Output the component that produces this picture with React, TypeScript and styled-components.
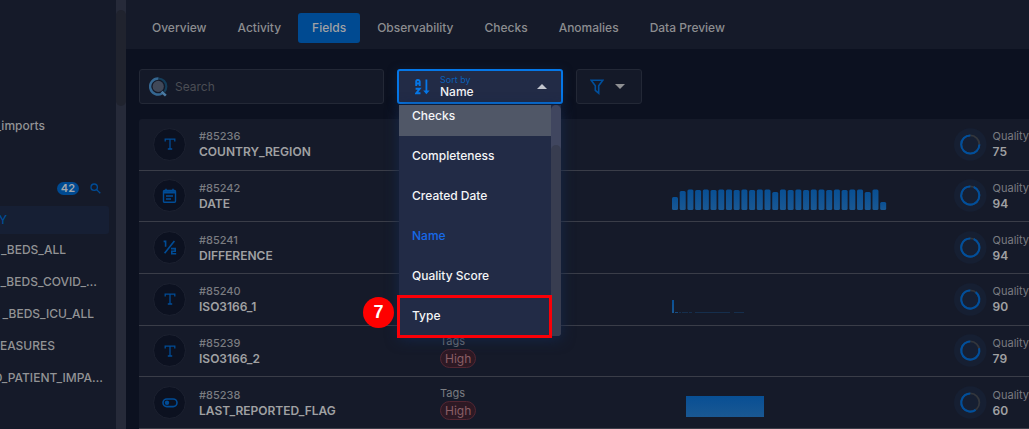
import React from 'react';
import styled, { createGlobalStyle } from 'styled-components';

const Global = createGlobalStyle`
  *, *::before, *::after { box-sizing: border-box; }
  body {
    margin: 0;
    background: #0c1120;
    color: #8f9196;
    font-family: Inter, "Liberation Sans", sans-serif;
    font-size: 12px;
    line-height: 16px;
    overflow: hidden;
  }
  button, input, select { font: inherit; color: inherit; }
  ul { margin: 0; padding: 0; list-style: none; }
`;

const Page = styled.div`
  display: flex;
  height: 100vh;
  overflow: hidden;
`;

/* ---------- sidebar ---------- */

const Sidebar = styled.aside`
  flex: none;
  width: 126px;
  display: flex;
  background: #151a29;
`;

const SidebarBody = styled.div`
  flex: 1;
  min-width: 0;
  padding-top: 110px;
`;

const ScrollTrack = styled.div`
  flex: none;
  width: 10px;
  padding-top: 10px;
  background: #262a39;
`;

const ScrollThumb = styled.div`
  height: 96px;
  border-radius: 5px;
  background: #20232e;
`;

const TreeItem = styled.a<{ $active?: boolean }>`
  display: flex;
  align-items: center;
  height: ${p => (p.$active ? 28 : 32)}px;
  margin-right: 7px;
  border-radius: 0 3px 3px 0;
  background: ${p => (p.$active ? '#161f34' : 'transparent')};
  color: ${p => (p.$active ? '#004c96' : '#929395')};
  font-weight: 500;
  text-decoration: none;
`;

const TreeLabel = styled.span<{ $visible: number }>`
  display: flex;
  justify-content: flex-end;
  width: ${p => p.$visible}px;
  overflow: hidden;
  white-space: nowrap;
`;

const TreeHeader = styled.div`
  display: flex;
  align-items: center;
  justify-content: flex-end;
  gap: 11px;
  height: 28px;
  margin-top: 32px;
  padding-right: 15px;
`;

const Tree = styled.nav`
  padding-top: 4px;
`;

const Count = styled.span`
  padding: 0 4px;
  border-radius: 7px;
  background: #004a91;
  color: #a3a7ac;
  font-size: 11px;
  font-weight: 600;
  line-height: 13px;
`;

const IconButton = styled.button`
  display: flex;
  padding: 0;
  border: 0;
  background: none;
  color: #004c96;
`;

/* ---------- main ---------- */

const Main = styled.main`
  flex: 1;
  min-width: 0;
  display: flex;
  flex-direction: column;
`;

const Tabs = styled.nav`
  display: flex;
  gap: 3px;
  padding: 13px 12px 6px;
  background: #151a29;
`;

const Tab = styled.button<{ $active?: boolean }>`
  height: 30px;
  padding: 0 14px;
  border: 0;
  border-radius: 3px;
  background: ${p => (p.$active ? '#004a91' : 'transparent')};
  color: ${p => (p.$active ? '#a0a2a5' : '#8c8d90')};
  font-weight: 500;
  white-space: nowrap;
`;

const Toolbar = styled.div`
  display: flex;
  gap: 13px;
  padding: 20px 13px 15px;
`;

const SearchBox = styled.label`
  display: flex;
  align-items: center;
  gap: 7px;
  width: 245px;
  height: 35px;
  padding: 0 9px;
  border: 1px solid #232836;
  border-radius: 3px;
  background: #141928;
`;

const SearchInput = styled.input`
  flex: 1;
  min-width: 0;
  padding: 0;
  border: 0;
  outline: 0;
  background: none;
  &::placeholder { color: #4b4d54; opacity: 1; }
`;

const SortField = styled.div`
  position: relative;
  display: flex;
  align-items: center;
  gap: 10px;
  width: 166px;
  height: 35px;
  padding: 0 14px 0 16px;
  border: 2px solid #0577e8;
  border-radius: 3px;
  background: #222b46;
  color: #0577e8;
  box-shadow: 0 2px 10px #10203c;
`;

const SortText = styled.div`
  flex: 1;
  min-width: 0;
  display: flex;
  flex-direction: column;
`;

const SortLabel = styled.label`
  color: #0a5fb8;
  font-size: 9px;
  line-height: 10px;
`;

const SortSelect = styled.select`
  appearance: none;
  height: 14px;
  padding: 0;
  border: 0;
  outline: 0;
  background: none;
  color: #f1f2f5;
  font-weight: 500;
  line-height: 14px;
`;

const Menu = styled.div`
  position: absolute;
  z-index: 2;
  top: 34px;
  left: 0;
  width: 162px;
  height: 231px;
  display: flex;
  background: #222b46;
  border-radius: 0 0 3px 3px;
  box-shadow: 0 3px 14px #14274a;
`;

const MenuList = styled.ul`
  flex: 1;
  display: flex;
  flex-direction: column;
  justify-content: flex-end;
  overflow: hidden;
`;

const MenuItem = styled.li<{ $hover?: boolean; $selected?: boolean }>`
  flex: none;
  display: flex;
  align-items: center;
  height: 40px;
  padding: 0 13px;
  background: ${p => (p.$hover ? '#505767' : 'transparent')};
  color: ${p => (p.$selected ? '#1769e8' : '#f4f5f7')};
  font-weight: 500;
`;

const MenuTrack = styled.div`
  width: 10px;
  display: flex;
  flex-direction: column;
  justify-content: flex-end;
  border-radius: 5px 5px 4px 0;
  background: #40465f;
`;

const MenuThumb = styled.div`
  height: 191px;
  border-radius: 5px 5px 4px 0;
  background: #383d50;
`;

const Highlight = styled.div`
  position: absolute;
  right: 9px;
  bottom: -2px;
  left: -2px;
  height: 43px;
  border: 3px solid #fb0007;
`;

const Step = styled.span`
  position: absolute;
  bottom: 8px;
  left: -36px;
  width: 31px;
  height: 31px;
  border-radius: 50%;
  background: #fe0000;
  color: #fff;
  font: 700 18px/30px "Liberation Sans", sans-serif;
  text-align: center;
`;

const FilterButton = styled.button`
  display: flex;
  align-items: center;
  justify-content: center;
  gap: 11px;
  width: 66px;
  height: 35px;
  padding: 0 3px 0 0;
  border: 1px solid #232836;
  border-radius: 3px;
  background: #141928;
  color: #004f9c;
`;

/* ---------- field list ---------- */

const FieldList = styled.ul`
  flex: 1;
  display: grid;
  grid-auto-rows: 1fr;
  margin-left: 13px;
  background: #151a29;
  border-radius: 3px 0 0 0;
`;

const FieldRow = styled.li`
  display: grid;
  grid-template-columns: 301fr 232fr 282fr 75px;
  align-items: center;
  border-bottom: 1px solid #3a3d48;
`;

const Lead = styled.div`
  display: flex;
  align-items: center;
  gap: 13px;
  padding-left: 14px;
`;

const TypeBadge = styled.span`
  display: flex;
  align-items: center;
  justify-content: center;
  width: 33px;
  height: 33px;
  border: 1px solid #1c2130;
  border-radius: 50%;
  background: #0c1120;
  color: #004c96;
`;

const Stack = styled.div`
  display: flex;
  flex-direction: column;
  align-items: flex-start;
`;

const Caption = styled.span<{ $strong?: boolean }>`
  color: #7a7c81;
  font-size: 11px;
  font-weight: ${p => (p.$strong ? 500 : 400)};
`;

const Value = styled.span`
  color: #a0a1a3;
  font-weight: 600;
`;

const Tag = styled.span`
  padding: 0 4px;
  border: 1px solid #532632;
  border-radius: 10px;
  background: #2d1924;
  color: #8a5f66;
  font-size: 12px;
  line-height: 17px;
`;

const Quality = styled.div`
  display: flex;
  align-items: center;
  gap: 6px;
`;

const ChartSvg = styled.svg`
  display: block;
  width: 216px;
  height: 28px;
`;

/* ---------- drawings ---------- */

const TextIcon = () => (
  <svg width="12" height="12" viewBox="0 0 12 12" fill="none" stroke="currentColor" strokeWidth="1.3">
    <path d="M1.2 3.6V1.1h9.6v2.5M6 1v10M3.8 11h4.4" />
  </svg>
);

const DateIcon = () => (
  <svg width="15" height="16" viewBox="0 0 15 16" fill="none" stroke="currentColor" strokeWidth="1.4">
    <rect x="1.5" y="2.5" width="12" height="11.8" rx="1" />
    <path d="M1.5 4h12M4 .8v2M11 .8v2M4 8h7M4 11h5" />
    <path d="M1.5 3.5h12v2h-12z" fill="currentColor" stroke="none" />
  </svg>
);

const FractionIcon = () => (
  <svg width="14" height="15" viewBox="0 0 14 15" fill="none" stroke="currentColor" strokeWidth="1.6">
    <path d="M.6 1.4h2v5.400M11.400 1L1.600 13.200M8 8.600h4.200v2.600H8.800v2.600h4.400" />
  </svg>
);

const ToggleIcon = () => (
  <svg width="16" height="10" viewBox="0 0 16 10" fill="none" stroke="currentColor" strokeWidth="1.6">
    <rect x="1" y="1" width="14" height="7.6" rx="3.8" />
    <circle cx="5" cy="4.8" r="2.2" fill="currentColor" stroke="none" />
  </svg>
);

const LogoIcon = () => (
  <svg width="19" height="20" viewBox="0 0 19 20" fill="none">
    <circle cx="9.2" cy="9.4" r="5.6" fill="#414959" />
    <path d="M9.4 1.5a8 8 0 0 1 7.9 8c0 2-.8 3.9-2 5.2" stroke="#143d5a" strokeWidth="2.2" />
    <path d="M9.4 1.5a8 8 0 1 0 3.6 15" stroke="#356791" strokeWidth="2.4" />
    <path d="M12.6 14.800l4.200 3.800" stroke="#4c7ba3" strokeWidth="2.6" />
  </svg>
);

const SortIcon = () => (
  <svg width="15" height="16" viewBox="0 0 15 16" fill="none" stroke="currentColor">
    <path d="M1.2 7V2.600Q1.200 1 2.600 1h.7Q4.700 1 4.700 2.600V7M1.200 4.500h3.500M.6 9.800h4.100L1.300 14.200h4.200" strokeWidth="1.9" />
    <path d="M11.400.5v12" strokeWidth="1.8" />
    <path d="M8.200 11.400h6.400l-3.200 3.800z" fill="currentColor" stroke="none" />
  </svg>
);

const FilterIcon = () => (
  <svg width="14" height="16" viewBox="0 0 14 16" fill="none" stroke="currentColor" strokeWidth="1.6">
    <path d="M1.2 1.3h11.600L8.700 6.800v7.400L5.300 11.300V6.800z" />
  </svg>
);

const Caret = ({ up }: { up?: boolean }) => (
  <svg width="10" height="5" viewBox="0 0 10 5">
    <path d={up ? 'M0 5h10L5 0z' : 'M0 0h10L5 5z'} fill={up ? '#c3c6cf' : '#8f9093'} />
  </svg>
);

const MagnifierIcon = () => (
  <svg width="11" height="11" viewBox="0 0 11 11" fill="none" stroke="currentColor" strokeWidth="1.3">
    <circle cx="4.2" cy="4.2" r="3.2" />
    <path d="M6.6 6.6l3.7 3.7" />
  </svg>
);

const Ring = ({ score }: { score: number }) => (
  <svg width="33" height="33" viewBox="0 0 33 33" fill="none">
    <circle cx="16.5" cy="16.5" r="16.5" fill="#161f32" />
    <circle cx="16.5" cy="16.5" r="9.2" stroke="#33363c" strokeWidth="1.8" />
    <circle
      cx="16.5" cy="16.5" r="9.2" stroke="#004f9c" strokeWidth="2.1" pathLength={100}
      strokeDasharray={`${score} 100`} transform={`rotate(${270 + (100 - score) * 3.6} 16.5 16.5)`}
    />
  </svg>
);

type Bar = { x: number; w: number; h: number; dim?: boolean };

const dailyHeights = [
  13, 19, 20.5, 20, 20.5, 20, 20.5, 20.5, 20, 20.5, 20, 20.5, 20.5, 18,
  20.5, 20, 20.5, 20, 20.5, 20.5, 20, 20.5, 20, 20.5, 20.5, 18, 20.5, 8,
];
const daily: Bar[] = dailyHeights.map((h, i) => ({ x: i * 7.71, w: 6, h }));
const skewed: Bar[] = [
  { x: 0, w: 2, h: 13 }, { x: 3, w: 3, h: 1 },
  { x: 7, w: 2, h: 1, dim: true }, { x: 10, w: 6, h: 1, dim: true }, { x: 17, w: 3, h: 1, dim: true },
  { x: 23, w: 35, h: 1, dim: true }, { x: 62, w: 10, h: 1, dim: true },
];
const single: Bar[] = [{ x: 14, w: 78, h: 21 }];

const Chart = ({ bars, round = 0 }: { bars: Bar[]; round?: number }) => (
  <ChartSvg viewBox="0 0 216 28" aria-hidden="true">
    <defs>
      <linearGradient id="bar" x1="0" y1="0" x2="0" y2="1">
        <stop offset="0" stopColor="#084f94" />
        <stop offset="1" stopColor="#1a5893" />
      </linearGradient>
    </defs>
    {bars.map(b => (
      <rect key={b.x} x={b.x} y={28 - b.h} width={b.w} height={b.h} rx={round}
        fill={b.h > 1 ? 'url(#bar)' : '#174d83'} opacity={b.dim ? 0.4 : 1} />
    ))}
  </ChartSvg>
);

/* ---------- data ---------- */

const tabs = ['Overview', 'Activity', 'Fields', 'Observability', 'Checks', 'Anomalies', 'Data Preview'];
const sortOptions = ['Checks', 'Completeness', 'Created Date', 'Name', 'Quality Score', 'Type'];
const tree = [
  { name: 'Y', visible: 7, active: true },
  { name: '_BEDS_ALL', visible: 66 },
  { name: '_BEDS_COVID_…', visible: 97 },
  { name: '_BEDS_ICU_ALL', visible: 94 },
  { name: 'MEASURES', visible: 55 },
  { name: 'D_PATIENT_IMPA…', visible: 103 },
];

type Field = { id: string; name: string; icon: React.ReactNode; score: number; tag?: string; chart?: React.ReactNode };

const fields: Field[] = [
  { id: '#85236', name: 'COUNTRY_REGION', icon: <TextIcon />, score: 75 },
  { id: '#85242', name: 'DATE', icon: <DateIcon />, score: 94, chart: <Chart bars={daily} round={1.5} /> },
  { id: '#85241', name: 'DIFFERENCE', icon: <FractionIcon />, score: 94 },
  { id: '#85240', name: 'ISO3166_1', icon: <TextIcon />, score: 90, chart: <Chart bars={skewed} /> },
  { id: '#85239', name: 'ISO3166_2', icon: <TextIcon />, score: 79, tag: 'High' },
  { id: '#85238', name: 'LAST_REPORTED_FLAG', icon: <ToggleIcon />, score: 60, tag: 'High', chart: <Chart bars={single} /> },
];

export default function App() {
  return (
    <Page>
      <Global />
      <Sidebar>
        <SidebarBody>
          <TreeItem href="#imports"><TreeLabel $visible={45}>_imports</TreeLabel></TreeItem>
          <TreeHeader>
            <Count>42</Count>
            <IconButton aria-label="Search tables"><MagnifierIcon /></IconButton>
          </TreeHeader>
          <Tree>
            {tree.map(t => (
              <TreeItem key={t.name} href="#table" $active={t.active}>
                <TreeLabel $visible={t.visible}>{t.name}</TreeLabel>
              </TreeItem>
            ))}
          </Tree>
        </SidebarBody>
        <ScrollTrack><ScrollThumb /></ScrollTrack>
      </Sidebar>
      <Main>
        <Tabs>
          {tabs.map(t => <Tab key={t} $active={t === 'Fields'}>{t}</Tab>)}
        </Tabs>
        <Toolbar>
          <SearchBox>
            <LogoIcon />
            <SearchInput type="text" placeholder="Search" aria-label="Search" />
          </SearchBox>
          <SortField>
            <SortIcon />
            <SortText>
              <SortLabel htmlFor="sort">Sort by</SortLabel>
              <SortSelect id="sort" defaultValue="Name">
                {sortOptions.map(o => <option key={o}>{o}</option>)}
              </SortSelect>
            </SortText>
            <Caret up />
            <Menu>
              <MenuList role="listbox" aria-label="Sort by">
                {sortOptions.map(o => (
                  <MenuItem key={o} role="option" aria-selected={o === 'Name'} $hover={o === 'Checks'} $selected={o === 'Name'}>
                    {o}
                  </MenuItem>
                ))}
              </MenuList>
              <MenuTrack><MenuThumb /></MenuTrack>
              <Highlight />
              <Step>7</Step>
            </Menu>
          </SortField>
          <FilterButton aria-label="Filter"><FilterIcon /><Caret /></FilterButton>
        </Toolbar>
        <FieldList>
          {fields.map(f => (
            <FieldRow key={f.id}>
              <Lead>
                <TypeBadge>{f.icon}</TypeBadge>
                <Stack><Caption $strong>{f.id}</Caption><Value>{f.name}</Value></Stack>
              </Lead>
              <Stack>
                {f.tag && <><Caption>Tags</Caption><Tag>{f.tag}</Tag></>}
              </Stack>
              <div>{f.chart}</div>
              <Quality>
                <Ring score={f.score} />
                <Stack><Caption>Quality</Caption><Value>{f.score}</Value></Stack>
              </Quality>
            </FieldRow>
          ))}
        </FieldList>
      </Main>
    </Page>
  );
}
